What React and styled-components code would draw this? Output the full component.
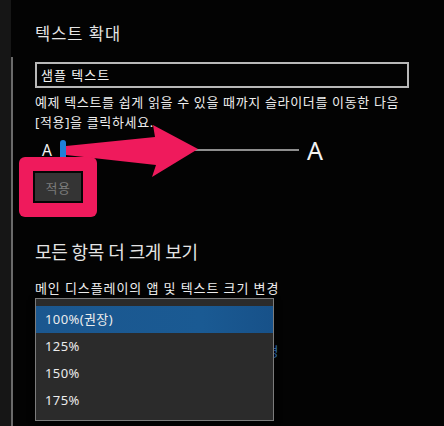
import React from "react";
import styled, { createGlobalStyle } from "styled-components";

const Global = createGlobalStyle`
  html, body { margin: 0; padding: 0; background: #030303; }
  body { font-family: "Noto Sans", "Noto Sans CJK KR", sans-serif; }
`;

const Screen = styled.div`
  position: relative;
  width: 444px;
  height: 426px;
  overflow: hidden;
  display: flex;
  background: #030303;
`;

const Side = styled.div`
  width: 11px;
  background: #161616;
`;

const SideRule = styled.div`
  width: 2px;
  margin-top: 57px;
  background: #6a6a6a;
`;

const Content = styled.div`
  flex: 1;
  display: flex;
  flex-direction: column;
  padding: 23px 0 0 22px;
`;

const Title = styled.div`
  font-size: ${(p) => p.$size}px;
  line-height: ${(p) => p.$lh}px;
  color: #e4e4e4;
  margin-top: ${(p) => p.$mt || 0}px;
  letter-spacing: ${(p) => p.$ls || 0}px;
`;

const TextBox = styled.div`
  box-sizing: border-box;
  margin-top: 17px;
  width: 374px;
  height: 26px;
  border: 2px solid #b8b8b8;
  padding: 0 4px;
  font-size: 13px;
  line-height: 22px;
  letter-spacing: 1px;
  color: #f4f4f4;
`;

const Body = styled.div`
  margin-top: ${(p) => p.$mt || 0}px;
  white-space: nowrap;
  font-size: 13px;
  line-height: 20px;
  letter-spacing: ${(p) => p.$ls ?? 0.9}px;
  color: #eeeeee;
`;

const SliderRow = styled.div`
  margin-top: 7px;
  height: 22px;
  display: flex;
  align-items: center;
`;

const SmallA = styled.span`
  margin-left: 7px;
  width: 18px;
  font-size: 15.5px;
  line-height: 22px;
  color: #f2f2f2;
`;

const Slider = styled.div`
  width: 239px;
  height: 21px;
  display: flex;
  align-items: center;
`;

const Thumb = styled.div`
  width: 6px;
  height: 21px;
  border-radius: 3px;
  background: #1f7fd8;
`;

const Track = styled.div`
  flex: 1;
  height: 2px;
  background: #8e8e8e;
`;

const BigA = styled.span`
  margin-left: 8px;
  font-size: 25px;
  line-height: 22px;
  color: #f2f2f2;
`;

const ButtonWrap = styled.div`
  position: relative;
  z-index: 1;
  align-self: flex-start;
  margin-top: 12px;
`;

const Highlight = styled.div`
  position: absolute;
  inset: -16px;
  border-radius: 6px;
  background: #ef1a5c;
`;

const ApplyButton = styled.button`
  position: relative;
  display: block;
  width: 46px;
  height: 28px;
  margin: 0;
  padding: 0;
  border: none;
  outline: 2px solid #050505;
  background: #343434;
  color: #7c7c7c;
  font-family: inherit;
  font-size: 13px;
  letter-spacing: 0.5px;
`;

const ComboWrap = styled.div`
  position: relative;
  z-index: 2;
  width: 239px;
  height: 36px;
`;

const Combo = styled.div`
  box-sizing: border-box;
  height: 32px;
  margin-top: 4px;
  border: 2px solid #8a8a8a;
`;

const Popup = styled.ul`
  position: absolute;
  top: 0;
  left: 0;
  box-sizing: border-box;
  width: 239px;
  height: 123px;
  margin: 0;
  padding: 7px 0 0;
  list-style: none;
  background: #2b2b2b;
  border: 1px solid #7c7c7c;
  box-shadow: 0 2px 6px rgba(0, 0, 0, 0.6);
`;

const Option = styled.li`
  height: 27px;
  padding-left: 9px;
  font-size: 13px;
  line-height: 27px;
  letter-spacing: 0.4px;
  color: #ececec;
  background: ${(p) => (p.$selected ? "linear-gradient(90deg, #1b578f, #1a5a93 70%, #175189)" : "transparent")};
`;

const Link = styled.div`
  margin-top: 7px;
  font-size: 13px;
  line-height: 20px;
  letter-spacing: 0.9px;
  color: #3479c4;
`;

const Annotation = styled.svg`
  position: absolute;
  left: 0;
  top: 0;
  z-index: 3;
  pointer-events: none;
`;

const options = ["100%(권장)", "125%", "150%", "175%"];

export default function App() {
  return (
    <>
      <Global />
      <Screen>
        <Side />
        <SideRule />
        <Content>
          <Title $size={16.5} $lh={22} $ls={1}>텍스트 확대</Title>
          <TextBox>샘플 텍스트</TextBox>
          <Body $mt={4} $ls={0.65}>
            예제 텍스트를 쉽게 읽을 수 있을 때까지 슬라이더를 이동한 다음
            <br />
            [적용]을 클릭하세요.
          </Body>
          <SliderRow>
            <SmallA>A</SmallA>
            <Slider>
              <Thumb />
              <Track />
            </Slider>
            <BigA>A</BigA>
          </SliderRow>
          <ButtonWrap>
            <Highlight />
            <ApplyButton>적용</ApplyButton>
          </ButtonWrap>
          <Title $size={18} $lh={28} $mt={37} $ls={-0.4}>모든 항목 더 크게 보기</Title>
          <Body $mt={12}>메인 디스플레이의 앱 및 텍스트 크기 변경</Body>
          <ComboWrap>
            <Combo />
            <Popup>
              {options.map((o, i) => (
                <Option key={o} $selected={i === 0}>{o}</Option>
              ))}
            </Popup>
          </ComboWrap>
          <Link>다른 디스플레이의 앱 및 텍스트 크기 변경</Link>
        </Content>
        <Annotation width="444" height="426" viewBox="0 0 444 426">
          <polygon
            points="66,146 155,137 153,125 198,149 152,177 156,165 66,155"
            fill="#ef1a5c"
          />
        </Annotation>
      </Screen>
    </>
  );
}
